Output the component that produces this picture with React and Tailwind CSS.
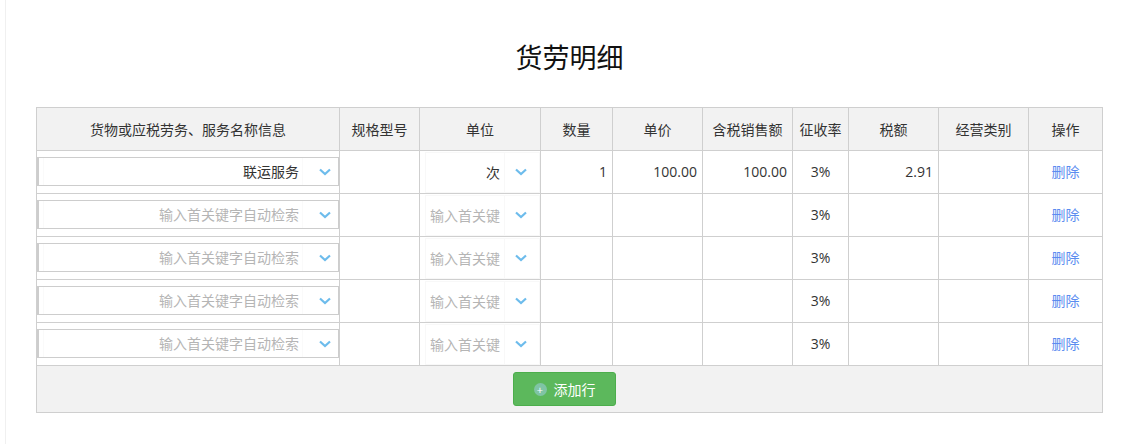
import React from "react";

const font = { fontFamily: '"Open Sans", "Noto Sans CJK SC", sans-serif' };

const headers = [
  "货物或应税劳务、服务名称信息",
  "规格型号",
  "单位",
  "数量",
  "单价",
  "含税销售额",
  "征收率",
  "税额",
  "经营类别",
  "操作",
];

const colWidths = [
  "w-[303px]",
  "w-[80px]",
  "w-[121px]",
  "w-[72px]",
  "w-[90px]",
  "w-[90px]",
  "w-[56px]",
  "w-[90px]",
  "w-[90px]",
  "w-[74px]",
];

const rows = [
  { name: "联运服务", unit: "次", qty: "1", price: "100.00", total: "100.00", tax: "2.91" },
  {},
  {},
  {},
  {},
];

const Chevron = () => (
  <svg width="12" height="8" viewBox="0 0 12 8" className="block">
    <path d="M1 1.5 L6 6 L11 1.5" fill="none" stroke="#6dbcec" strokeWidth="2.2" />
  </svg>
);

const cell = "border border-[#cfcfcf] p-0 h-[43px] text-[14px]";
const numCell = `${cell} pr-[5px] pb-[2px] text-right text-[14.5px] text-[#333]`;

const App = () => {
  return (
    <div className="w-[1129px] h-[444px] overflow-hidden bg-white" style={font}>
      <div className="ml-[5px] h-full border-l border-[#f0f0f0] pl-[30px]">
        <h1 className="h-[107px] w-[1067px] pt-[36px] text-center text-[27px] leading-[44px] font-normal text-[#111]">
          货劳明细
        </h1>
        <table className="w-[1067px] table-fixed border-collapse">
          <colgroup>
            {colWidths.map((w, i) => (
              <col key={i} className={w} />
            ))}
          </colgroup>
          <thead>
            <tr className="bg-[#f2f2f2]">
              {headers.map((h) => (
                <th key={h} className={`${cell} text-center font-normal text-[#333]`}>
                  {h}
                </th>
              ))}
            </tr>
          </thead>
          <tbody>
            {rows.map((row, i) => (
              <tr key={i}>
                <td className={cell}>
                  <div className="mb-[1px] flex h-[29px] items-center border border-l-2 border-[#cdcdcd] bg-white">
                    <span className={`ml-[4px] flex-1 border-l border-r border-[#fafafa] pr-[3px] text-right leading-[27px] ${row.name ? "text-[#333]" : "text-[#b5b5b5]"}`}>
                      {row.name || "输入首关键字自动检索"}
                    </span>
                    <span className="flex w-[35px] justify-center pl-[9px]">
                      <Chevron />
                    </span>
                  </div>
                </td>
                <td className={cell}></td>
                <td className={cell}>
                  <div className="ml-[5px] flex h-[41px] items-center border border-[#f8f8f8]">
                    <span className={`w-[79px] border-r border-[#f8f8f8] pr-[4px] text-right leading-[39px] ${row.unit ? "text-[#333]" : "text-[#b5b5b5]"}`}>
                      {row.unit || "输入首关键"}
                    </span>
                    <span className="flex flex-1 justify-center pr-[2px]">
                      <Chevron />
                    </span>
                  </div>
                </td>
                <td className={numCell}>{row.qty}</td>
                <td className={numCell}>{row.price}</td>
                <td className={numCell}>{row.total}</td>
                <td className={`${cell} pb-[2px] text-center text-[14.5px] text-[#333]`}>3%</td>
                <td className={numCell}>{row.tax}</td>
                <td className={cell}></td>
                <td className={`${cell} pb-[2px] text-center text-[#5b8cf0]`}>删除</td>
              </tr>
            ))}
            <tr className="bg-[#f2f2f2]">
              <td colSpan={10} className="h-[47px] border border-[#cfcfcf] p-0">
                <div className="flex justify-center pr-[10px]">
                  <button className="flex h-[34px] w-[103px] items-center justify-center gap-[7px] rounded-[3px] border border-[#4cae4c] bg-[#5cb85c] text-[14px] text-white">
                    <span className="flex h-[13px] w-[13px] items-center justify-center rounded-full bg-[#7fc4a4] text-[11px] leading-none">
                      +
                    </span>
                    添加行
                  </button>
                </div>
              </td>
            </tr>
          </tbody>
        </table>
      </div>
    </div>
  );
};

export default App;
